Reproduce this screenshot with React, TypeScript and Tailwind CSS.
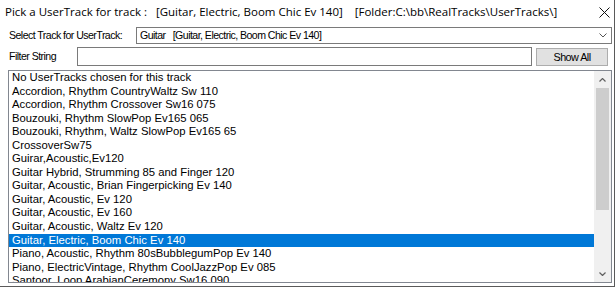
const tracks = [
    'No UserTracks chosen for this track',
    'Accordion, Rhythm CountryWaltz Sw 110',
    'Accordion, Rhythm Crossover Sw16 075',
    'Bouzouki, Rhythm SlowPop Ev165 065',
    'Bouzouki, Rhythm, Waltz SlowPop Ev165 65',
    'CrossoverSw75',
    'Guirar,Acoustic,Ev120',
    'Guitar Hybrid, Strumming 85 and Finger 120',
    'Guitar, Acoustic, Brian Fingerpicking Ev 140',
    'Guitar, Acoustic, Ev 120',
    'Guitar, Acoustic, Ev 160',
    'Guitar, Acoustic, Waltz Ev 120',
    'Guitar, Electric, Boom Chic Ev 140',
    'Piano, Acoustic, Rhythm 80sBubblegumPop Ev 140',
    'Piano, ElectricVintage, Rhythm CoolJazzPop Ev 085',
    'Santoor, Loop ArabianCeremony Sw16 090',
]

const selected = 12

export default function App() {
    return (
        <div className="relative h-[287px] w-[615px] overflow-hidden border-b border-r border-[#5a5a5a] bg-white font-['Open_Sans',sans-serif] text-black">
            {/* Title bar */}
            <div className="flex h-[24px] items-center pl-[5px] pr-[4px] text-[11.5px]">
                <span className="whitespace-pre">
                    {'Pick a UserTrack for track :   [Guitar, Electric, Boom Chic Ev 140]    [Folder:C:\\bb\\RealTracks\\UserTracks\\]'}
                </span>
                <svg className="ml-auto h-[11px] w-[11px]" viewBox="0 0 11 11">
                    <path d="M0.5 0.5 L10.5 10.5 M10.5 0.5 L0.5 10.5" stroke="#111" strokeWidth="1" />
                </svg>
            </div>

            {/* Select track */}
            <div className="mt-[3px] flex h-[17px] items-center pl-[9px] pr-[2px] font-['Liberation_Sans',sans-serif] text-[10.6px] tracking-[-0.55px]">
                <span className="w-[127px] shrink-0 whitespace-nowrap">Select Track for UserTrack:</span>
                <div className="flex h-full flex-1 items-center border border-[#7a7a7a] pl-[3px] pr-[4px]">
                    <span className="whitespace-pre">{'Guitar   [Guitar, Electric, Boom Chic Ev 140]'}</span>
                    <svg className="ml-auto h-[5px] w-[8px]" viewBox="0 0 8 5">
                        <path d="M0.5 0.5 L4 4 L7.5 0.5" fill="none" stroke="#555" strokeWidth="1" />
                    </svg>
                </div>
            </div>

            {/* Filter */}
            <div className="mt-[3px] flex h-[19px] items-center pl-[9px] pr-[6px] font-['Liberation_Sans',sans-serif] text-[10.6px] tracking-[-0.55px]">
                <span className="w-[68px] shrink-0 whitespace-nowrap">Filter String</span>
                <div className="h-full flex-1 border border-[#7a7a7a]" />
                <button className="ml-[4px] h-[18px] w-[72px] border border-[#adadad] bg-[#e1e1e1] text-[10.8px]">
                    Show All
                </button>
            </div>

            {/* List */}
            <div className="ml-[8px] mr-[2px] mt-[4px] flex h-[213px] border border-[#828790] font-['Liberation_Sans',sans-serif] text-[11.3px]">
                <div className="flex-1 overflow-hidden">
                    {tracks.map((t, i) => (
                        <div
                            key={t}
                            className={`h-[13.55px] whitespace-nowrap pl-[3px] leading-[13.55px] ${
                                i === selected ? 'bg-[#0078d7] text-white' : ''
                            }`}
                        >
                            {t}
                        </div>
                    ))}
                </div>
                <div className="flex w-[17px] flex-col bg-[#f0f0f0]">
                    <div className="flex h-[17px] items-center justify-center">
                        <svg className="h-[4px] w-[7px]" viewBox="0 0 7 4">
                            <path d="M0.5 3.5 L3.5 0.5 L6.5 3.5" fill="none" stroke="#606060" strokeWidth="1.2" />
                        </svg>
                    </div>
                    <div className="mx-[2px] h-[122px] bg-[#cdcdcd]" />
                    <div className="mt-auto flex h-[17px] items-center justify-center">
                        <svg className="h-[4px] w-[7px]" viewBox="0 0 7 4">
                            <path d="M0.5 0.5 L3.5 3.5 L6.5 0.5" fill="none" stroke="#606060" strokeWidth="1.2" />
                        </svg>
                    </div>
                </div>
            </div>
        </div>
    )
}
